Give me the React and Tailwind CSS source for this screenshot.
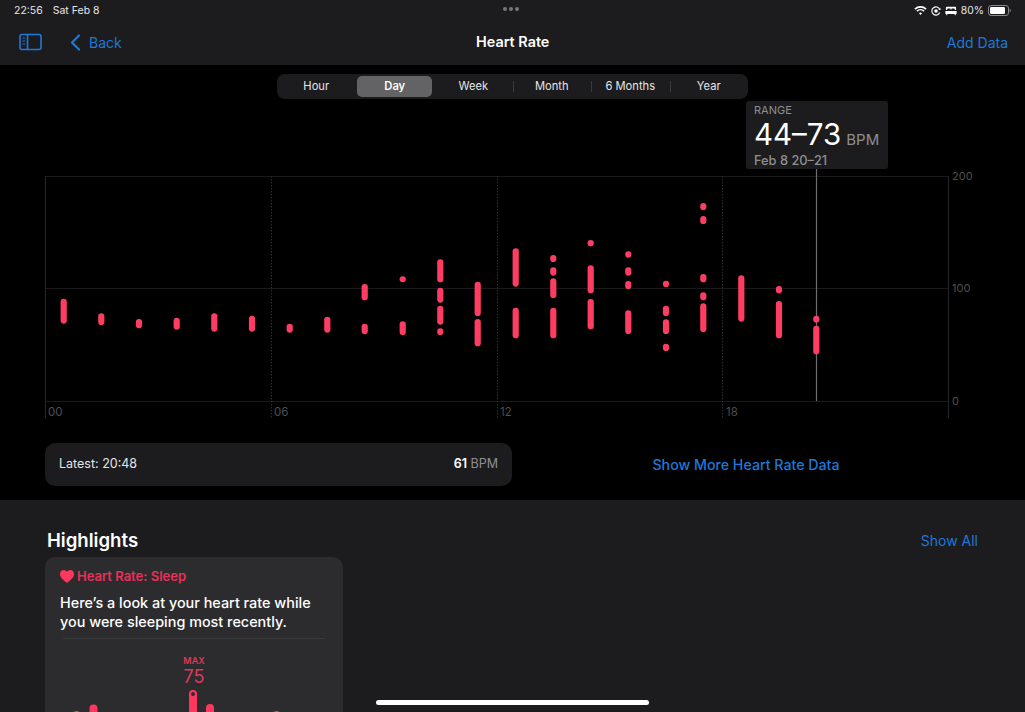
import React from "react";

const BLUE = "#1f78d8";

// each hour column: x centre, then [top, bottom] of each pill
const hours = [
  [63.7, [[298.7, 323.7]]],
  [101.3, [[313.3, 325]]],
  [139, [[319, 328.3]]],
  [176.7, [[317.7, 329.7]]],
  [214.3, [[313.3, 331.7]]],
  [252, [[315.7, 331.7]]],
  [289.7, [[323.7, 332.7]]],
  [327.3, [[316.7, 332.7]]],
  [364.7, [[284, 300.3], [323.7, 334]]],
  [402.7, [[276.3, 282.3], [321.3, 335]]],
  [440.3, [[259.3, 282.3], [287.7, 302.7], [305.7, 324.7], [328.3, 335]]],
  [477.7, [[281.7, 316], [319, 346.3]]],
  [515.7, [[248.3, 286.7], [307.7, 338.3]]],
  [553.3, [[255, 262], [267.3, 275.7], [278.3, 298], [307.7, 338.3]]],
  [590.7, [[240, 246.3], [265.3, 293.3], [299, 329.3]]],
  [628.3, [[251.3, 257.7], [267.3, 275.7], [281, 289], [310.3, 334]]],
  [666, [[280.7, 287], [305.7, 316], [319.3, 334], [343.7, 351]]],
  [703.3, [[203, 210], [216, 224], [274, 282.3], [292.3, 300.3], [303.3, 332]]],
  [741.3, [[275.3, 321.7]]],
  [779, [[286, 293.3], [301, 338.3]]],
  [816.3, [[315.7, 322.7], [325.7, 354.3]]],
];

const tabs = ["Hour", "Day", "Week", "Month", "6 Months", "Year"];

function SidebarIcon() {
  return (
    <svg width="24" height="18" viewBox="0 0 24 18" fill="none" stroke={BLUE} strokeWidth="1.6">
      <rect x="1" y="1.5" width="21" height="15" rx="2" />
      <path d="M8.5 1.5v15" />
      <path d="M3.5 5h2.5M3.5 8h2.5M3.5 11h2.5" strokeWidth="1.2" />
    </svg>
  );
}

function StatusIcons() {
  return (
    <div className="flex items-center gap-[4px]">
      <svg width="13" height="11" viewBox="0 0 14 11" fill="none" stroke="white" strokeWidth="1.7">
        <path d="M1 4a8.6 8.6 0 0 1 12 0" />
        <path d="M3.2 6.2a5.5 5.5 0 0 1 7.6 0" />
        <path d="M7 10.4 5.3 8.4a2.6 2.6 0 0 1 3.4 0z" fill="white" stroke="none" />
      </svg>
      <svg width="10" height="10" viewBox="0 0 11 11" fill="none" stroke="white">
        <path d="M9.6 7.2A4.5 4.5 0 1 1 9.6 3.8" strokeWidth="1.2" />
        <path d="M10.4 1.8v2.6H7.9z" fill="white" stroke="none" />
        <circle cx="5.5" cy="5.5" r="2" fill="white" stroke="none" />
      </svg>
      <svg width="12" height="10" viewBox="0 0 13 10" fill="white">
        <path d="M2 0.5h9a1 1 0 0 1 1 1V4H10.6V3.2a.8.8 0 0 0-.8-.8H7.6a.8.8 0 0 0-.8.8V4H6.2v-.8a.8.8 0 0 0-.8-.8H3.2a.8.8 0 0 0-.8.8V4H1V1.5a1 1 0 0 1 1-1z" />
        <path d="M0.4 5h12.2v3.2H11.6V9.6h-.8L10.3 8.2H2.7L2.2 9.6h-.8V8.2H.4z" />
      </svg>
      <span className="pt-[1px] text-[10.4px] leading-none text-[#e5e5e7]">80%</span>
      <svg width="23" height="11" viewBox="0 0 23 11" fill="none">
        <rect x="0.5" y="0.5" width="20" height="10" rx="2.6" stroke="#8a8a8c" />
        <rect x="2" y="2" width="15" height="7" rx="1.3" fill="white" />
        <path d="M21.6 3.8c.8.2 1.2.9 1.2 1.7s-.4 1.5-1.2 1.7z" fill="#8a8a8c" />
      </svg>
    </div>
  );
}

function Header() {
  return (
    <header className="relative h-[65px] bg-[#1c1c1e] px-[14px]">
      <div className="flex h-[21px] items-center justify-between text-[10.5px] text-[#e5e5e7]">
        <div className="flex gap-[10px]">
          <span>22:56</span>
          <span>Sat Feb 8</span>
        </div>
        <StatusIcons />
      </div>
      <div className="absolute left-[503px] top-[7px] flex gap-[2px]">
        <span className="size-[4px] rounded-full bg-[#77777b]" />
        <span className="size-[4px] rounded-full bg-[#77777b]" />
        <span className="size-[4px] rounded-full bg-[#77777b]" />
      </div>
      <div className="relative mt-[1px] flex h-[40px] items-center justify-between pl-[5px] pr-[3px]">
        <div className="flex items-center">
          <SidebarIcon />
          <svg className="ml-[27px]" width="11" height="17" viewBox="0 0 11 17" fill="none" stroke={BLUE} strokeWidth="2.2" strokeLinecap="round" strokeLinejoin="round">
            <path d="M9 1.5 2 8.5l7 7" />
          </svg>
          <span className="ml-[8px] text-[14px] text-[#1f78d8]">Back</span>
        </div>
        <span className="text-[14px] text-[#1f78d8]">Add Data</span>
        <span className="absolute left-[462px] text-[14.4px] font-semibold text-white">Heart Rate</span>
      </div>
    </header>
  );
}

function Segments() {
  return (
    <div className="mx-auto flex h-[25px] w-[471px] items-center rounded-lg bg-[#1c1c1e]">
      {tabs.map((t, i) => (
        <div key={t} className="relative flex h-[21px] flex-1 items-center justify-center">
          {t === "Day" ? (
            <span className="flex h-[21px] w-[75px] items-center justify-center rounded-[5px] bg-[#636366] text-[11.2px] font-semibold text-white">{t}</span>
          ) : (
            <span className="text-[11.2px] text-[#e5e5e7]">{t}</span>
          )}
          {i > 2 && <span className="absolute left-0 top-[5px] h-[11px] w-px bg-[#3a3a3c]" />}
        </div>
      ))}
    </div>
  );
}

function Chart() {
  const line = "#1a1a1c";
  const text = { fontSize: 11.5, fill: "#4e4e50", fontFamily: "Inter, sans-serif" };
  return (
    <svg className="block" width="1025" height="344" viewBox="0 99 1025 344">
      <path d="M45 176.5H948M45 288.5H948M45 401.5H948" stroke={line} />
      <path d="M45.5 176V418M948.5 176V418" stroke="#262628" />
      <path d="M271.5 176V418M497.5 176V418M722.5 176V418" stroke="#2e2e30" strokeDasharray="1.5 1.5" />
      <path d="M816.5 169V401" stroke="#6e6e72" strokeWidth="1.2" />
      <text x="48" y="416" {...text}>00</text>
      <text x="274" y="416" {...text}>06</text>
      <text x="500" y="416" {...text}>12</text>
      <text x="726" y="416" {...text}>18</text>
      <text x="952" y="180" fontSize="11" fill="#4e4e50" fontFamily="Inter, sans-serif">200</text>
      <text x="952" y="292" fontSize="11" fill="#4e4e50" fontFamily="Inter, sans-serif">100</text>
      <text x="952" y="405" fontSize="11" fill="#4e4e50" fontFamily="Inter, sans-serif">0</text>
      {hours.map(([x, pills]) =>
        pills.map(([a, b]) => (
          <rect key={`${x}-${a}`} x={x - 3.1} y={a} width="6.2" height={b - a} rx="3.1" fill="#ff3d63" />
        ))
      )}
    </svg>
  );
}

function RangeTip() {
  return (
    <div className="absolute left-[746px] top-[36px] h-[68px] w-[142px] rounded-[3px] bg-[#1c1c1e] pl-[8px] pt-[3px]">
      <div className="text-[11px] leading-[13px] text-[#8e8e93]">RANGE</div>
      <div className="mt-[2px] flex h-[30px] items-baseline leading-[30px]">
        <span className="text-[29.5px] text-white">44–73</span>
        <span className="ml-[5px] text-[15px] text-[#8e8e93]">BPM</span>
      </div>
      <div className="mt-[4px] text-[12.8px] leading-[15px] font-medium text-[#8e8e93]">Feb 8 20–21</div>
    </div>
  );
}

function SleepCard() {
  return (
    <div className="ml-[45px] mt-[4px] h-[155px] w-[298px] overflow-hidden rounded-t-[10px] bg-[#2c2c2e] px-[15px] pt-[10px]">
      <div className="flex items-center gap-[3px]">
        <svg width="14" height="13" viewBox="0 0 24 22" fill="#ff375f">
          <path d="M12 22C5 16.5 0 12 0 6.6 0 2.8 3 0 6.5 0 8.8 0 10.8 1.2 12 3.2 13.2 1.2 15.2 0 17.5 0 21 0 24 2.8 24 6.6 24 12 19 16.5 12 22z" />
        </svg>
        <span className="text-[13px] font-semibold text-[#e8305a]">Heart Rate: Sleep</span>
      </div>
      <p className="mt-[6px] text-[14.4px] leading-[19px] font-medium text-white">
        Here’s a look at your heart rate while you were sleeping most recently.
      </p>
      <div className="mx-[3px] mt-[7px] h-px bg-[#38383a]" />
      <div className="mt-[16px] text-center text-[9px] leading-[11px] font-semibold text-[#d93a5f]">MAX</div>
      <div className="mt-[1px] text-center text-[18px] leading-[20px] text-[#d93a5f]">75</div>
      <svg className="-mx-[15px] mt-[1px] block" width="298" height="30" viewBox="45 687 298 30">
        <rect x="72.5" y="710" width="8" height="10" rx="4" fill="#ff375f" />
        <rect x="89.5" y="703.5" width="8" height="14" rx="4" fill="#ff375f" />
        <rect x="189" y="689" width="8" height="30" rx="4" fill="#ff375f" />
        <circle cx="193" cy="693" r="2" fill="#2c2c2e" />
        <rect x="206" y="703" width="8" height="14" rx="4" fill="#ff375f" />
        <rect x="272.5" y="710" width="8" height="10" rx="4" fill="#ff375f" />
      </svg>
    </div>
  );
}

export default function App() {
  return (
    <div className="relative h-[712px] w-[1025px] overflow-hidden bg-black font-['Inter',sans-serif]">
      <Header />
      <main className="relative h-[435px] pt-[9px]">
        <Segments />
        <Chart />
        <div className="flex items-center pl-[45px]">
          <div className="flex h-[43px] w-[467px] items-center justify-between rounded-[10px] bg-[#1c1c1e] px-[14px] text-[12.5px] text-[#e5e5e7]">
            <span>Latest: 20:48</span>
            <span>
              <b className="font-semibold text-white">61</b> <span className="text-[#8e8e93]">BPM</span>
            </span>
          </div>
          <a className="w-[468px] text-center text-[14.2px] font-medium text-[#1f78d8]">Show More Heart Rate Data</a>
        </div>
        <RangeTip />
      </main>
      <section className="h-[212px] bg-[#1c1c1e]">
        <div className="flex items-center justify-between pl-[47px] pr-[47px] pt-[27px]">
          <h2 className="text-[18.6px] leading-[26px] font-semibold text-white">Highlights</h2>
          <span className="text-[14px] text-[#1f78d8]">Show All</span>
        </div>
        <SleepCard />
      </section>
      <div className="absolute bottom-[7px] left-[376px] h-[5px] w-[273px] rounded-full bg-white" />
    </div>
  );
}
